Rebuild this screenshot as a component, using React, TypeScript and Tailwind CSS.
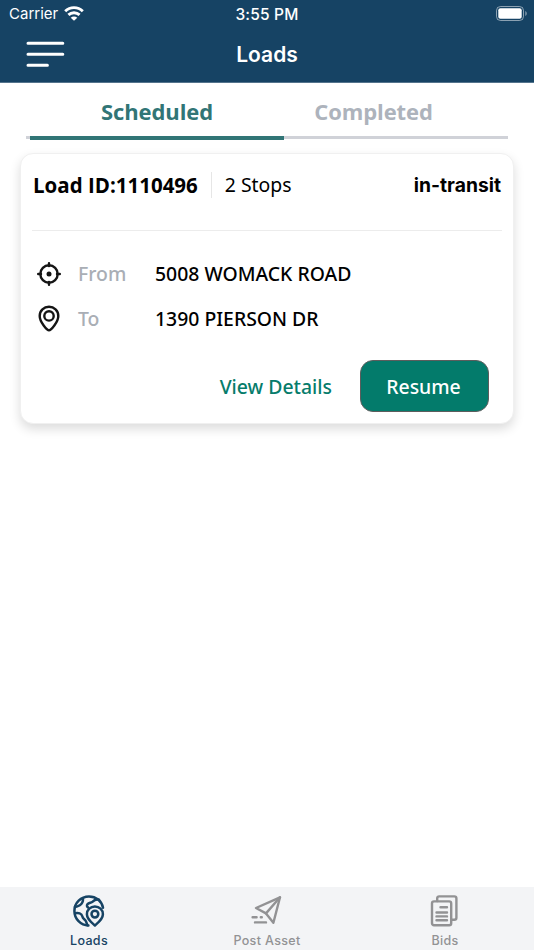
import React, { useState } from 'react'

interface Load {
  id: string
  stops: number
  status: string
  from: string
  to: string
}

const loads: Load[] = [
  { id: '1110496', stops: 2, status: 'in-transit', from: '5008 WOMACK ROAD', to: '1390 PIERSON DR' }
]

const WifiIcon = () => (
  <svg width="20" height="15" viewBox="0 0 20 15" fill="none" stroke="white" strokeWidth="2.9">
    <path d="M1.2 5.2C6.2 0.4 13.8 0.4 18.8 5.2" />
    <path d="M4.4 8.9C7.6 6 12.4 6 15.6 8.9" />
    <path d="M10 14.8L6.7 11.8C8.6 10 11.4 10 13.3 11.8Z" fill="white" stroke="none" />
  </svg>
)

const BatteryIcon = () => (
  <svg width="32" height="15" viewBox="0 0 32 15" fill="none">
    <rect x="0.5" y="0.5" width="27" height="14" rx="4" stroke="white" strokeOpacity="0.5" />
    <rect x="2.3" y="2.3" width="23.4" height="10.4" rx="2" fill="white" />
    <path d="M29.3 5C31.2 5.7 31.2 9.3 29.3 10Z" fill="white" fillOpacity="0.5" />
  </svg>
)

const MenuIcon = () => (
  <svg width="39" height="28" viewBox="0 0 39 28" stroke="white" strokeWidth="3" strokeLinecap="round">
    <path d="M2 2.2H36.8M2 13.2H36.8M2 24.2H21.4" />
  </svg>
)

const TargetIcon = () => (
  <svg width="26" height="26" viewBox="0 0 26 26" fill="none" stroke="#151515" strokeWidth="2.4" strokeLinecap="round">
    <circle cx="13" cy="13" r="8.7" />
    <path d="M13 2.2V5M13 21V23.8M2.2 13H5M21 13H23.8" />
    <circle cx="13" cy="13" r="2.5" fill="#151515" stroke="none" />
  </svg>
)

const PinIcon = () => (
  <svg width="26" height="28" viewBox="0 0 26 28" fill="none" stroke="#151515" strokeWidth="2.4" strokeLinejoin="round">
    <path d="M13 25.4C11.2 25.4 3.7 17.2 3.7 11C3.7 5.8 7.9 1.8 13 1.8C18.1 1.8 22.3 5.8 22.3 11C22.3 17.2 14.8 25.4 13 25.4Z" />
    <circle cx="13" cy="10.9" r="4.7" />
  </svg>
)

const GlobeIcon = () => (
  <svg width="34" height="34" viewBox="0 0 34 34" fill="none" stroke="currentColor" strokeWidth="2.5" strokeLinecap="round" strokeLinejoin="round">
    <path d="M31 13.8C29.8 7.1 24 2.4 17 2.4C8.9 2.4 2.4 8.9 2.4 17C2.4 25 8.8 31.3 16.4 31.5" />
    <path d="M11 4.4C11.2 7.8 10.4 9.6 7.8 11.3C5.8 12.6 4.3 13 2.9 12.9" />
    <path d="M3.2 19.3C6.3 18.5 9.6 19.5 10.3 22.3C10.8 24.6 12.2 25 13.3 26.3C14.7 28 14.5 29.7 15.5 31.2" />
    <path d="M27 5.8C24.3 5 22.2 6.1 20.7 7.6C19.3 9 17 8.6 15.6 10.1C14.5 11.5 14.9 12.7 16 13.4" />
    <path d="M22.9 31.5C20.8 29.5 14.9 25.4 14.9 20.2C14.9 15.8 18.5 12.4 22.9 12.4C27.3 12.4 30.9 15.8 30.9 20.2C30.9 25.4 25 29.5 22.9 31.5Z" />
    <circle cx="22.9" cy="20.1" r="3.4" />
  </svg>
)

const PlaneIcon = () => (
  <svg width="34" height="34" viewBox="0 0 34 34" fill="none" stroke="currentColor" strokeWidth="2.4" strokeLinecap="round" strokeLinejoin="round">
    <path d="M30 3.3L6 14L16 19.4L23.4 28.7L30 3.3Z" />
    <path d="M30 3.3L16 19.4" />
    <path d="M2.6 23.2H6.6M10.8 23.2H11.8M5 28.4H16" />
  </svg>
)

const BidsIcon = () => (
  <svg width="34" height="34" viewBox="0 0 34 34" fill="none" stroke="currentColor" strokeWidth="2.4" strokeLinecap="round" strokeLinejoin="round">
    <path d="M9.2 7V4.3C9.2 3 9.9 2.4 11.2 2.4H26.3C27.7 2.4 28.4 3 28.4 4.4V23.8C28.4 25.2 27.7 25.8 26.3 25.8H24" />
    <rect x="4" y="7.4" width="19.2" height="23.8" rx="2" />
    <path d="M12.5 13.3H19M8.5 18.5H19M8.5 22.4H19M8.5 26.3H19" />
  </svg>
)

const navItems = [
  { label: 'Loads', icon: GlobeIcon },
  { label: 'Post Asset', icon: PlaneIcon },
  { label: 'Bids', icon: BidsIcon }
]

export default function App() {
  const [tab, setTab] = useState('Scheduled')
  const [screen, setScreen] = useState('Loads')

  return (
    <div className="flex h-[950px] w-[534px] flex-col overflow-hidden bg-white font-['Noto_Sans',sans-serif]">
      {/* Header */}
      <header className="h-[83px] border-b border-[#54748d] bg-[#164364] font-['Inter',sans-serif] text-white">
        <div className="grid h-[27px] grid-cols-3 items-center pr-[6px] pl-[9px]">
          <div className="flex items-center gap-[6px] text-[15px] leading-[22px]">
            <span className="pt-px">Carrier</span>
            <WifiIcon />
          </div>
          <div className="pt-[2px] pr-[3px] text-center text-[15.5px] font-medium tracking-[0.2px]">3:55 PM</div>
          <div className="flex justify-end">
            <BatteryIcon />
          </div>
        </div>
        <div className="grid grid-cols-3 items-center px-[26px]">
          <button aria-label="Menu">
            <MenuIcon />
          </button>
          <h1 className="text-center text-[21px] leading-[55px] font-semibold">Loads</h1>
        </div>
      </header>

      {/* Tabs */}
      <div className="mx-[26px] flex h-[56px] border-b-[3px] border-[#d0d2d8] pl-1 font-['Open_Sans',sans-serif] text-[22px] font-bold tracking-[-0.1px]">
        {['Scheduled', 'Completed'].map((name) => (
          <button
            key={name}
            onClick={() => setTab(name)}
            className={`-mb-[3px] h-[57px] shrink-0 border-b-4 pt-1 ${name === 'Scheduled' ? 'w-[254px]' : 'w-[179px]'} ${
              tab === name ? 'border-[#317576] text-[#317576]' : 'border-transparent text-[#adb3bc]'
            }`}
          >
            {name}
          </button>
        ))}
      </div>

      {/* Load cards */}
      <main className="flex-1 px-5 pt-[14px]">
        {loads.map((load) => (
          <div
            key={load.id}
            className="h-[271px] rounded-[13px] border border-[#f0f0f0] bg-white px-[11px] text-[19.4px] text-black shadow-[0_5px_11px_rgba(0,0,0,0.14)]"
          >
            <div className="flex h-[77px] items-start border-b border-[#ececec] pt-[18px]">
              <span className="ml-px font-['Open_Sans',sans-serif] text-[20.5px] leading-[26px] font-bold">Load ID:{load.id}</span>
              <span className="ml-[13px] border-l border-[#e6e6e6] pl-[13px] leading-[26px]">{load.stops} Stops</span>
              <span className="mr-px ml-auto font-['Inter',sans-serif] text-[19.3px] leading-[26px] font-bold">{load.status}</span>
            </div>
            <div className="mt-[20px] flex h-[45px] items-center">
              <span className="ml-[3.5px] w-[42.5px]"><TargetIcon /></span>
              <span className="w-[77px] pt-px font-medium text-[#a9aeb5]">From</span>
              <span className="pt-px font-medium">{load.from}</span>
            </div>
            <div className="flex h-[45px] items-center">
              <span className="ml-[3.5px] w-[42.5px]"><PinIcon /></span>
              <span className="w-[77px] pt-px font-medium text-[#a9aeb5]">To</span>
              <span className="pt-px font-medium">{load.to}</span>
            </div>
            <div className="mt-[19px] flex items-center justify-end pr-[13px]">
              <button className="mr-[28px] pt-px font-medium text-[#067c6b]">View Details</button>
              <button className="h-[52px] w-[129px] rounded-[13px] border border-[#5d5d5d] bg-[#037b6b] pt-px pr-[2px] font-medium text-white">
                Resume
              </button>
            </div>
          </div>
        ))}
      </main>

      {/* Bottom navigation */}
      <nav className="grid h-[63px] grid-cols-3 bg-[#f3f4f6] font-['Inter',sans-serif]">
        {navItems.map(({ label, icon: Icon }) => (
          <button
            key={label}
            onClick={() => setScreen(label)}
            className={`flex flex-col items-center pt-[7px] text-[12.5px] font-medium tracking-[0.35px] ${
              screen === label ? 'text-[#164364]' : 'text-[#929294]'
            }`}
          >
            <Icon />
            <span className="mt-[3px] leading-5">{label}</span>
          </button>
        ))}
      </nav>
    </div>
  )
}
